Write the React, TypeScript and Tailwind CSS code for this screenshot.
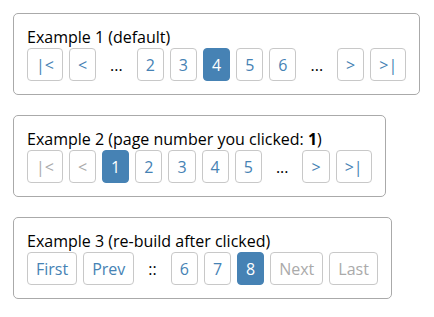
import React from 'react';

type Item = {
  label: string;
  kind: 'page' | 'active' | 'disabled' | 'gap';
};

const example1: Item[] = [
  { label: '|<', kind: 'page' },
  { label: '<', kind: 'page' },
  { label: '...', kind: 'gap' },
  { label: '2', kind: 'page' },
  { label: '3', kind: 'page' },
  { label: '4', kind: 'active' },
  { label: '5', kind: 'page' },
  { label: '6', kind: 'page' },
  { label: '...', kind: 'gap' },
  { label: '>', kind: 'page' },
  { label: '>|', kind: 'page' },
];

const example2: Item[] = [
  { label: '|<', kind: 'disabled' },
  { label: '<', kind: 'disabled' },
  { label: '1', kind: 'active' },
  { label: '2', kind: 'page' },
  { label: '3', kind: 'page' },
  { label: '4', kind: 'page' },
  { label: '5', kind: 'page' },
  { label: '...', kind: 'gap' },
  { label: '>', kind: 'page' },
  { label: '>|', kind: 'page' },
];

const example3: Item[] = [
  { label: 'First', kind: 'page' },
  { label: 'Prev', kind: 'page' },
  { label: '::', kind: 'gap' },
  { label: '6', kind: 'page' },
  { label: '7', kind: 'page' },
  { label: '8', kind: 'active' },
  { label: 'Next', kind: 'disabled' },
  { label: 'Last', kind: 'disabled' },
];

const PageItem: React.FC<{ item: Item }> = ({ item }) => {
  if (item.kind === 'gap') {
    return (
      <span className="h-[33px] px-2 flex items-center justify-center text-black">
        {item.label}
      </span>
    );
  }
  const styles = {
    page: 'border-[#c8c8c8] text-[#4682b4] bg-white',
    active: 'border-[#4682b4] bg-[#4682b4] text-white',
    disabled: 'border-[#c8c8c8] text-[#aaaaaa] bg-white',
  }[item.kind];
  return (
    <button className={`h-[33px] min-w-[27px] px-2 flex items-center justify-center border rounded-[4px] ${styles}`}>
      {item.label}
    </button>
  );
};

const Pager: React.FC<{ title: React.ReactNode; items: Item[] }> = ({ title, items }) => (
  <div className="border border-[#aaaaaa] rounded-[5px] pt-[12px] pb-[13px] px-[13px]">
    <div className="h-[22px] leading-[22px] text-black">{title}</div>
    <div className="flex gap-[6px]">
      {items.map((item, index) => (
        <PageItem key={index} item={item} />
      ))}
    </div>
  </div>
);

export default function App() {
  return (
    <div
      className="bg-white w-[434px] h-[317px] p-[13px] flex flex-col items-start gap-5 text-[16px]"
      style={{ fontFamily: '"Open Sans", sans-serif' }}
    >
      <Pager title="Example 1 (default)" items={example1} />
      <Pager
        title={
          <>
            Example 2 (page number you clicked: <b>1</b>)
          </>
        }
        items={example2}
      />
      <Pager title="Example 3 (re-build after clicked)" items={example3} />
    </div>
  );
}
